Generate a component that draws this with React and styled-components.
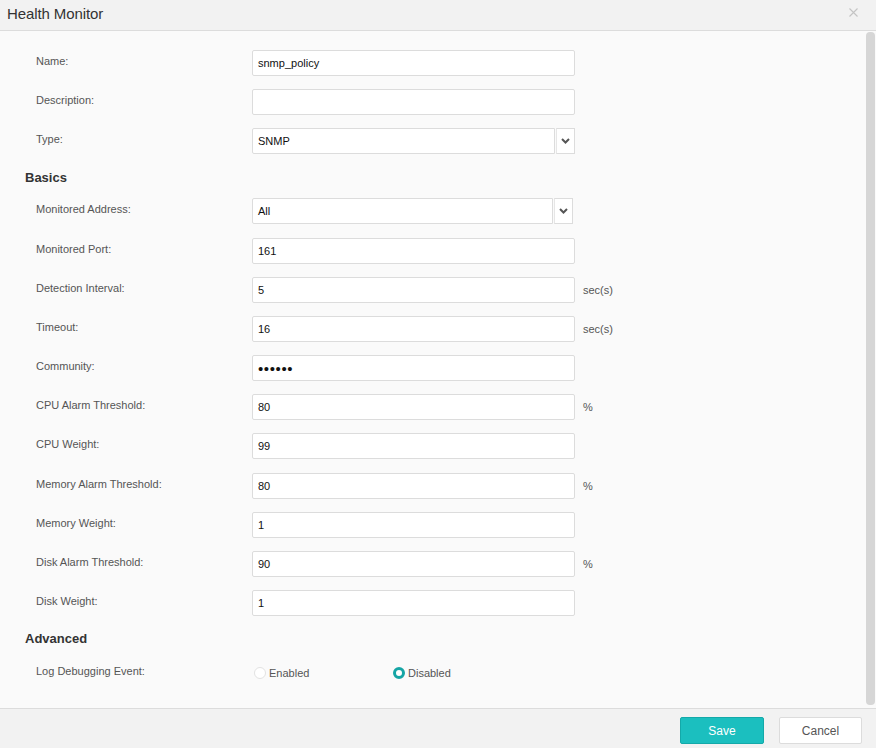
import React from "react";
import styled, { createGlobalStyle } from "styled-components";

const Global = createGlobalStyle`
  html, body { margin: 0; padding: 0; height: 100%; }
  body { font-family: "Liberation Sans", Arial, sans-serif; background: #fafafa; }
  #root { height: 100%; }
`;

const Dialog = styled.div`
  width: 876px;
  height: 748px;
  display: flex;
  flex-direction: column;
  background: #fafafa;
  overflow: hidden;
`;

const Header = styled.div`
  height: 30px;
  flex: none;
  display: flex;
  align-items: center;
  justify-content: space-between;
  padding: 0 18px 0 7px;
  background: #f2f2f2;
  border-bottom: 1px solid #dcdcdc;
`;

const Title = styled.div`
  font-size: 15px;
  color: #333;
  letter-spacing: -0.1px;
  margin-top: -3px;
`;

const Close = styled.svg`
  width: 9px;
  height: 9px;
  margin-top: -6px;
`;

const BodyWrap = styled.div`
  flex: 1;
  display: flex;
  min-height: 0;
  border-bottom: 1px solid #dcdcdc;
`;

const Body = styled.div`
  flex: 1;
  padding: 19px 0 0 0;
`;

const Scrollbar = styled.div`
  width: 9px;
  margin: 1px 1px 3px 0;
  border-radius: 4px;
  background: #d6d6d6;
  flex: none;
`;

const Row = styled.div`
  display: grid;
  grid-template-columns: 216px 323px auto;
  align-items: center;
  height: 26px;
  margin-bottom: 13.2px;
  padding-left: 36px;
`;

const Label = styled.div`
  font-size: 11px;
  color: #555;
  margin-top: -4px;
`;

const Input = styled.div`
  box-sizing: border-box;
  height: 26px;
  border: 1px solid #dcdcdc;
  border-radius: 2px;
  background: #fff;
  font-size: ${(p) => (p.$password ? "15px" : "11px")};
  color: #111;
  padding-left: 5px;
  display: flex;
  align-items: center;
  letter-spacing: ${(p) => (p.$password ? "0.6px" : "0")};
`;

const SelectBox = styled.div`
  display: flex;
  width: ${(p) => p.$w}px;
  height: 26px;
`;

const SelectField = styled(Input)`
  flex: 1;
  border-radius: 2px 0 0 2px;
`;

const Arrow = styled.div`
  box-sizing: border-box;
  width: 19px;
  height: 26px;
  margin-left: 1px;
  border: 1px solid #dcdcdc;
  border-left-color: #e6e6e6;
  background: #fff;
  display: flex;
  align-items: center;
  justify-content: center;
`;

const Unit = styled.div`
  font-size: 11px;
  color: #555;
  padding-left: 8px;
`;

const Heading = styled.div`
  font-size: 13px;
  font-weight: bold;
  color: #333;
  line-height: 18px;
  height: 18px;
  padding: 1px 0 0 25px;
  margin-bottom: 11.8px;
`;

const Radios = styled.div`
  display: flex;
  align-items: center;
  margin-left: 2px;
`;

const RadioOpt = styled.label`
  display: flex;
  align-items: center;
  width: 139px;
  font-size: 11px;
  color: #555;
`;

const Dot = styled.span`
  box-sizing: border-box;
  width: 12px;
  height: 12px;
  border-radius: 50%;
  margin-right: 3px;
  background: #fff;
  border: ${(p) => (p.$on ? "3.5px solid #16a5a5" : "1px solid #e2e2e2")};
`;

const Footer = styled.div`
  height: 39px;
  flex: none;
  background: #f2f2f2;
  display: flex;
  justify-content: flex-end;
  align-items: flex-start;
  padding: 8px 14px 0 0;
  gap: 15px;
  box-sizing: border-box;
`;

const Button = styled.button`
  box-sizing: border-box;
  height: 27px;
  width: ${(p) => (p.$primary ? 84 : 83)}px;
  border-radius: 2px;
  font-family: "Liberation Sans", Arial, sans-serif;
  font-size: 12px;
  cursor: pointer;
  border: 1px solid ${(p) => (p.$primary ? "#14a9a9" : "#dcdcdc")};
  background: ${(p) => (p.$primary ? "#1bbfbf" : "#fff")};
  color: ${(p) => (p.$primary ? "#fff" : "#555")};
`;

const Chevron = () => (
  <svg width="9" height="6" viewBox="0 0 9 6">
    <path d="M1 1l3.5 3.5L8 1" stroke="#555" strokeWidth="2" fill="none" />
  </svg>
);

const Field = ({ label, value, unit, password }) => (
  <Row>
    <Label>{label}</Label>
    <Input $password={password}>{value}</Input>
    {unit ? <Unit>{unit}</Unit> : <span />}
  </Row>
);

const Select = ({ label, value, w }) => (
  <Row>
    <Label>{label}</Label>
    <SelectBox $w={w}>
      <SelectField>{value}</SelectField>
      <Arrow>
        <Chevron />
      </Arrow>
    </SelectBox>
    <span />
  </Row>
);

export default function App() {
  return (
    <Dialog>
      <Global />
      <Header>
        <Title>Health Monitor</Title>
        <Close viewBox="0 0 9 9">
          <path d="M0.5 0.5L8.5 8.5M8.5 0.5L0.5 8.5" stroke="#c4c4c4" strokeWidth="1.1" />
        </Close>
      </Header>
      <BodyWrap>
        <Body>
          <Field label="Name:" value="snmp_policy" />
          <Field label="Description:" value="" />
          <Select label="Type:" value="SNMP" w={323} />
          <Heading>Basics</Heading>
          <Select label="Monitored Address:" value="All" w={321} />
          <Field label="Monitored Port:" value="161" />
          <Field label="Detection Interval:" value="5" unit="sec(s)" />
          <Field label="Timeout:" value="16" unit="sec(s)" />
          <Field label="Community:" value="••••••" password />
          <Field label="CPU Alarm Threshold:" value="80" unit="%" />
          <Field label="CPU Weight:" value="99" />
          <Field label="Memory Alarm Threshold:" value="80" unit="%" />
          <Field label="Memory Weight:" value="1" />
          <Field label="Disk Alarm Threshold:" value="90" unit="%" />
          <Field label="Disk Weight:" value="1" />
          <Heading>Advanced</Heading>
          <Row>
            <Label>Log Debugging Event:</Label>
            <Radios>
              <RadioOpt>
                <Dot />
                Enabled
              </RadioOpt>
              <RadioOpt>
                <Dot $on />
                Disabled
              </RadioOpt>
            </Radios>
            <span />
          </Row>
        </Body>
        <Scrollbar />
      </BodyWrap>
      <Footer>
        <Button $primary>Save</Button>
        <Button>Cancel</Button>
      </Footer>
    </Dialog>
  );
}
